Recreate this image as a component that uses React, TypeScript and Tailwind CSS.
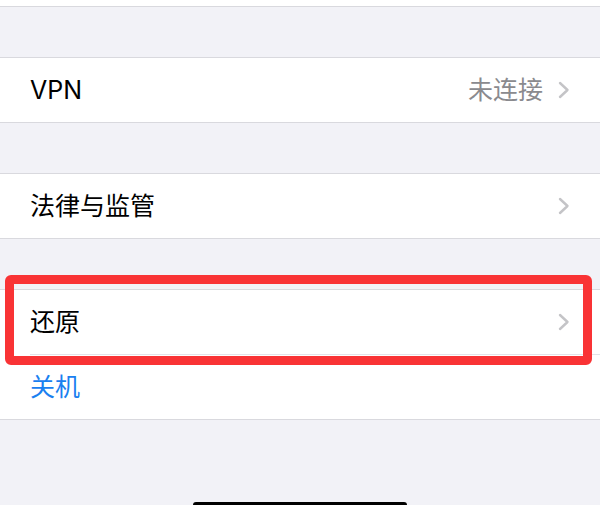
import React from "react";

const font = { fontFamily: '"Inter", "Noto Sans CJK SC", sans-serif' };

const Chevron = () => (
    <svg width="12" height="18" viewBox="0 0 12 18" fill="none">
        <polyline points="2,2 9.5,9 2,16" stroke="#c4c4c7" strokeWidth="2.4" strokeLinecap="round" strokeLinejoin="round" />
    </svg>
);

interface RowProps {
    label: string;
    value?: string;
    chevron?: boolean;
    blue?: boolean;
}

const Row: React.FC<RowProps> = ({ label, value, chevron = true, blue }) => (
    <div className="h-[64px] pl-[30px] pr-[30px] flex items-center justify-between bg-white">
        <span className={`text-[25px] leading-none ${blue ? "text-[#1a80f0]" : "text-black"}`}>{label}</span>
        <div className="flex items-center gap-[15px]">
            {value && <span className="text-[25px] leading-none text-[#8a8a8e]">{value}</span>}
            {chevron && <Chevron />}
        </div>
    </div>
);

export default function App() {
    return (
        <div className="relative w-[600px] h-[505px] flex flex-col bg-[#f2f2f7] overflow-hidden" style={font}>
            {/* 上一组的底部 */}
            <div className="h-[7px] bg-white border-b border-[#d9d9de]" />
            <div className="h-[50px]" />

            <div className="border-y border-[#d9d9de]">
                <Row label="VPN" value="未连接" />
            </div>
            <div className="h-[50px]" />

            <div className="border-y border-[#d9d9de]">
                <Row label="法律与监管" />
            </div>
            <div className="h-[50px]" />

            <div className="border-y border-[#d9d9de] bg-white">
                <Row label="还原" />
                <div className="ml-[30px] h-px bg-[#e3e3e8]" />
                <Row label="关机" chevron={false} blue />
            </div>

            <div className="flex-1 flex items-end justify-center">
                <div className="w-[214px] h-[3px] bg-black rounded-t-full" />
            </div>

            {/* 红色标注框 */}
            <div className="absolute left-[5px] top-[275px] w-[587px] h-[90px] border-[9px] border-[#f93335] rounded-[6px]" />
        </div>
    );
}
